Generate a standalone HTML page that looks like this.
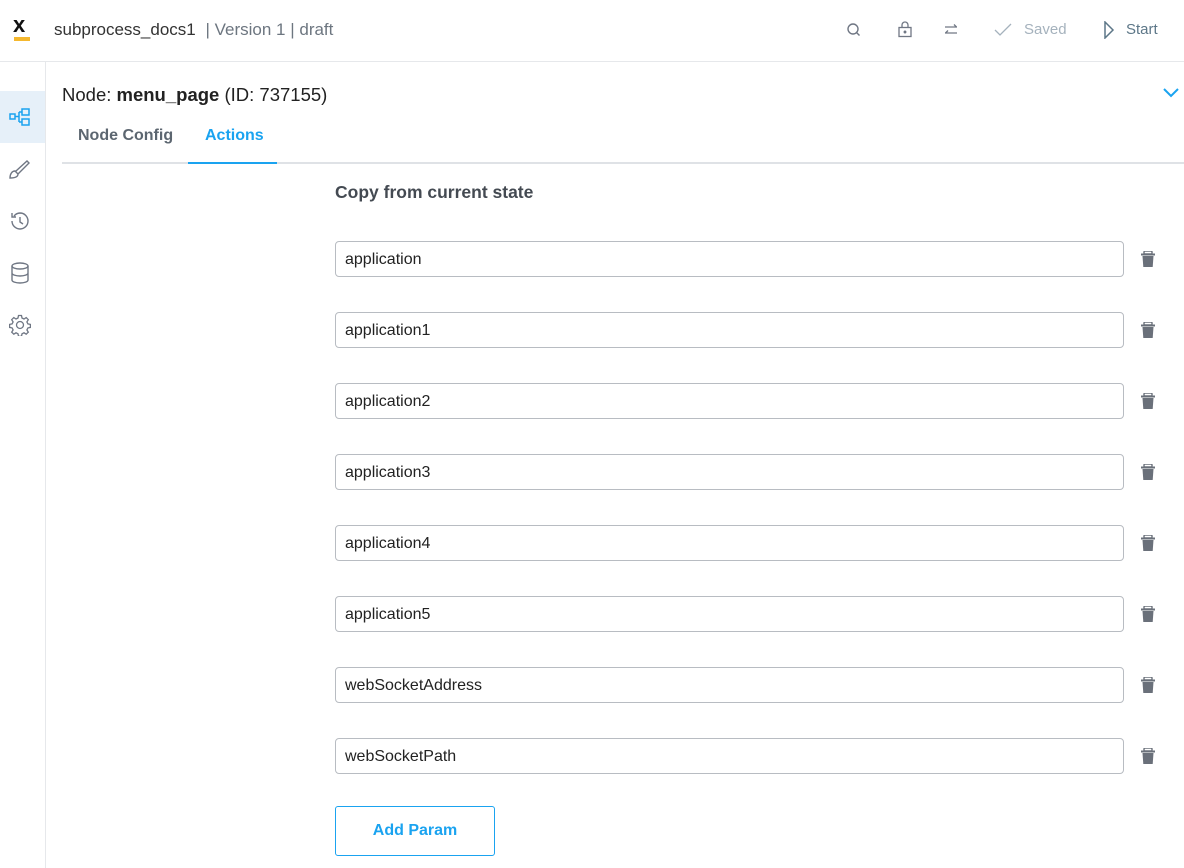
<!DOCTYPE html>
<html><head><style>
*{box-sizing:border-box;margin:0;padding:0}
body{width:1184px;height:868px;overflow:hidden;background:#fff;font-family:"Liberation Sans",sans-serif;position:relative;color:#333}
.hdr{position:absolute;left:0;top:0;width:1184px;height:62px;border-bottom:1px solid #e6e8eb}
.side{position:absolute;left:0;top:62px;width:46px;height:806px;border-right:1px solid #e6e8eb}
.abs{position:absolute}
.inp{position:absolute;left:335px;width:789px;height:36px;border:1px solid #b8bcc2;border-radius:4px;font-size:16px;color:#222;padding:9px 0 0 9px}
.tr{position:absolute;left:1141px}
</style></head><body>
<div class="hdr">
  <div class="abs" style="left:13px;top:16px;font-weight:bold;font-size:22px;line-height:18px;color:#111">x</div>
  <div class="abs" style="left:14px;top:37px;width:16px;height:4px;background:#f5b82e"></div>
  <div class="abs" style="left:54px;top:20px;font-size:17px;color:#333">subprocess_docs1 <span style="color:#6d7680;margin-left:5px">| Version 1 | draft</span></div>
  <svg class="abs" style="left:846px;top:22px" width="16" height="16" viewBox="0 0 16 16" fill="none" stroke="#707784" stroke-width="1.4"><circle cx="7" cy="7" r="5"/><path d="M10.5 10.5l3 3"/></svg>
  <svg class="abs" style="left:897px;top:20px" width="16" height="18" viewBox="0 0 16 18" fill="none" stroke="#707784" stroke-width="1.3"><rect x="2" y="7.5" width="12" height="9"/><path d="M5 7.5V5a3 3 0 016 0v2.5"/><circle cx="8" cy="12" r=".8" fill="#707784"/></svg>
  <svg class="abs" style="left:943px;top:22px" width="16" height="16" viewBox="0 0 16 16" fill="none" stroke="#707784" stroke-width="1.3"><path d="M2 5h12M11 2.5l2.5 2.5M14 11H2M5 8.5L2.5 11"/></svg>
  <svg class="abs" style="left:993px;top:22px" width="20" height="16" viewBox="0 0 20 16" fill="none" stroke="#a5b2bd" stroke-width="1.3"><path d="M2 8l5 5L18 2"/></svg>
  <div class="abs" style="left:1024px;top:21px;font-size:15px;color:#a5b2bd">Saved</div>
  <svg class="abs" style="left:1103px;top:21px" width="12" height="18" viewBox="0 0 12 18" fill="none" stroke="#5d7788" stroke-width="1.5"><path d="M2 1v16l8-8z"/></svg>
  <div class="abs" style="left:1126px;top:21px;font-size:15px;color:#5d7788">Start</div>
</div>
<div class="side">
  <div class="abs" style="left:0;top:29px;width:45px;height:52px;background:#e6f0f9"></div>
  <svg class="abs" style="left:9px;top:46px" width="22" height="18" viewBox="0 0 22 18" fill="none" stroke="#1aa3f0" stroke-width="1.5"><rect x="1" y="6" width="5" height="5"/><rect x="13" y="1" width="7" height="6"/><rect x="13" y="11" width="7" height="6"/><path d="M6 8.5h4M10 4v10M10 4h3M10 14h3"/></svg>
  <svg class="abs" style="left:9px;top:97px" width="22" height="22" viewBox="0 0 22 22" fill="none" stroke="#707784" stroke-width="1.4"><path d="M1 19c0-4 2-7 5-7l3 3c0 3-4 4-8 4zM7 12L18 2l2 2-11 11"/></svg>
  <svg class="abs" style="left:9px;top:148px" width="22" height="22" viewBox="0 0 22 22" fill="none" stroke="#707784" stroke-width="1.4"><path d="M3 11a8 8 0 108-8 8 8 0 00-6 3M3 3v4h4M11 7v5l3 2"/></svg>
  <svg class="abs" style="left:10px;top:200px" width="20" height="22" viewBox="0 0 20 22" fill="none" stroke="#707784" stroke-width="1.4"><ellipse cx="10" cy="4" rx="8" ry="3"/><path d="M2 4v14c0 1.7 3.6 3 8 3s8-1.3 8-3V4M2 11c0 1.7 3.6 3 8 3s8-1.3 8-3"/></svg>
  <svg class="abs" style="left:9px;top:252px" width="22" height="22" viewBox="0 0 22 22" fill="none" stroke="#707784" stroke-width="1.3"><circle cx="11" cy="11" r="3.5"/><path d="M9.5 1.5h3l.5 2.5 2 1 2.2-1.4 2.1 2.1-1.4 2.2 1 2 2.5.5v3l-2.5.5-1 2 1.4 2.2-2.1 2.1-2.2-1.4-2 1-.5 2.5h-3l-.5-2.5-2-1-2.2 1.4-2.1-2.1 1.4-2.2-1-2-2.5-.5v-3l2.5-.5 1-2-1.4-2.2 2.1-2.1 2.2 1.4 2-1z"/></svg>
</div>
<div class="abs" style="left:62px;top:84px;font-size:18.5px;color:#222">Node: <b>menu_page</b> (ID: 737155)</div>
<svg class="abs" style="left:1162px;top:87px" width="18" height="12" viewBox="0 0 18 12" fill="none" stroke="#1aa3f0" stroke-width="2"><path d="M2 2l7 7 7-7"/></svg>
<div class="abs" style="left:78px;top:127px;font-size:16px;font-weight:bold;color:#5c6670">Node Config</div>
<div class="abs" style="left:205px;top:127px;font-size:16px;font-weight:bold;color:#1aa3f0">Actions</div>
<div class="abs" style="left:62px;top:162px;width:1122px;height:2px;background:#dfe2e6"></div>
<div class="abs" style="left:188px;top:162px;width:89px;height:2px;background:#1aa3f0"></div>
<div class="abs" style="left:335px;top:182px;font-size:17.5px;font-weight:bold;color:#444a52">Copy from current state</div>

<div class="inp" style="top:241px">application</div>
<div class="inp" style="top:312px">application1</div>
<div class="inp" style="top:383px">application2</div>
<div class="inp" style="top:454px">application3</div>
<div class="inp" style="top:525px">application4</div>
<div class="inp" style="top:596px">application5</div>
<div class="inp" style="top:667px">webSocketAddress</div>
<div class="inp" style="top:738px">webSocketPath</div>

<svg width="0" height="0" style="position:absolute"><defs><g id="t"><rect x="3" y="0" width="8" height="3" rx="1" fill="none" stroke="#6a707a" stroke-width="1.4"/><rect x="0" y="2.5" width="14" height="2" fill="#6a707a"/><path d="M1.5 5h11l-.8 11h-9.4z" fill="#6a707a"/></g></defs></svg>
<svg class="tr" style="top:251px" width="14" height="16"><use href="#t"/></svg>
<svg class="tr" style="top:322px" width="14" height="16"><use href="#t"/></svg>
<svg class="tr" style="top:393px" width="14" height="16"><use href="#t"/></svg>
<svg class="tr" style="top:464px" width="14" height="16"><use href="#t"/></svg>
<svg class="tr" style="top:535px" width="14" height="16"><use href="#t"/></svg>
<svg class="tr" style="top:606px" width="14" height="16"><use href="#t"/></svg>
<svg class="tr" style="top:677px" width="14" height="16"><use href="#t"/></svg>
<svg class="tr" style="top:748px" width="14" height="16"><use href="#t"/></svg>

<div class="abs" style="left:335px;top:806px;width:160px;height:50px;border:1px solid #1aa3f0;border-radius:3px;color:#1aa3f0;font-size:16px;font-weight:bold;text-align:center;line-height:48px">Add Param</div>
</body></html>
